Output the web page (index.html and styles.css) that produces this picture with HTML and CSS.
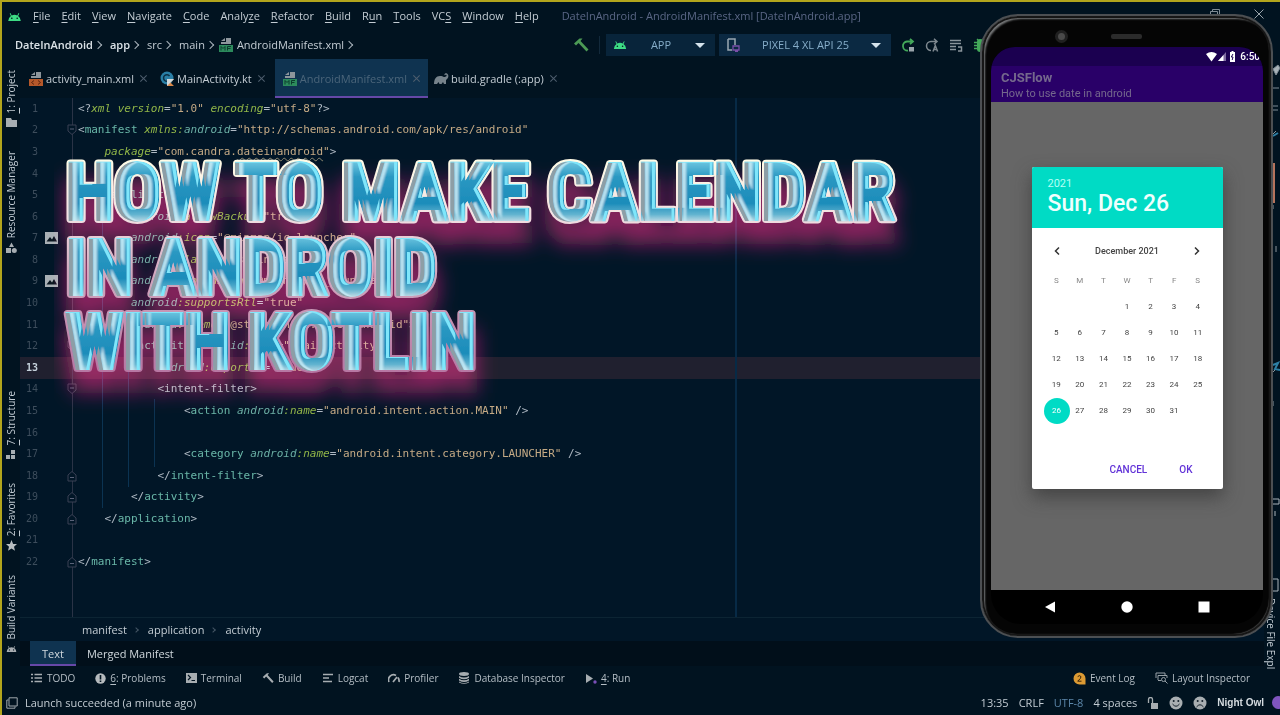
FILE: index.html
```html
<!DOCTYPE html>
<html lang="en">
<head>
<meta charset="utf-8">
<title>DateInAndroid - AndroidManifest.xml</title>
<link rel="stylesheet" href="styles.css">
</head>
<body>
<svg class="defs" width="0" height="0" aria-hidden="true">
  <symbol id="droid" viewBox="0 0 16 10"><path d="M1 10a7 7 0 0 1 3-5.600L2.700 1.600l.8-.4 1.400 2.700a7 7 0 0 1 6.200 0l1.400-2.700.8.400L12 4.400A7 7 0 0 1 15 10z" fill="currentColor"/><circle cx="5" cy="7" r=".9" fill="#011320"/><circle cx="11" cy="7" r=".9" fill="#011320"/></symbol>
  <symbol id="hammer" viewBox="0 0 16 16"><path d="M1 6.500 6.500 1.500h3L7.500 4l8 8.500-2 2L5.500 6 3 8.500z" fill="currentColor"/></symbol>
  <symbol id="manifest" viewBox="0 0 16 16"><path d="M8 1h5v6H3V5h5z" fill="#8d969c"/><path d="M3 4l4-3v3z" fill="#8d969c"/><path d="M1 8h14v7H1z" fill="#2c8a5c"/><path d="M3 13.500V9.500l2 2 2-2v4M9.500 13.500v-4h3.500M9.500 11.500h3" fill="none" stroke="#0b3b2c"/></symbol>
  <symbol id="layout" viewBox="0 0 16 16"><path d="M8 1h5v6H3V5h5z" fill="#8d969c"/><path d="M3 4l4-3v3z" fill="#8d969c"/><path d="M1 8h14v7H1z" fill="#b5582a"/><path d="M6 9.500l-2.500 2L6 13.500M10 9.500l2.500 2-2.500 2" fill="none" stroke="#5a2410"/></symbol>
  <symbol id="down" viewBox="0 0 10 12"><path d="M1 1h8v6L5 10.500 1 7z" fill="#011627" stroke="#3a4155"/><path d="M3 5h4" stroke="#5a6278"/></symbol>
  <symbol id="up" viewBox="0 0 10 12"><path d="M1 11h8V5L5 1.500 1 5z" fill="#011627" stroke="#3a4155"/><path d="M3 7.500h4" stroke="#5a6278"/></symbol>
  <symbol id="image" viewBox="0 0 13 12"><path d="M0 0h13v12H0z" fill="#a9b0b5"/><path d="M1.500 9.500 5 5l2 2.500L9 4l3 5.500z" fill="#0a1620"/></symbol>
</svg>

<div class="ide">
  <header class="menubar">
    <svg class="logo" width="15" height="9"><use href="#droid"/></svg>
    <nav class="menus">
      <button><u>F</u>ile</button><button><u>E</u>dit</button><button><u>V</u>iew</button><button><u>N</u>avigate</button><button><u>C</u>ode</button><button>Analy<u>z</u>e</button><button><u>R</u>efactor</button><button><u>B</u>uild</button><button>R<u>u</u>n</button><button><u>T</u>ools</button><button>VC<u>S</u></button><button><u>W</u>indow</button><button><u>H</u>elp</button>
    </nav>
    <span class="title">DateInAndroid - AndroidManifest.xml [DateInAndroid.app]</span>
    <div class="window-controls">
      <button aria-label="Restore"><svg width="10" height="10" viewBox="0 0 10 10" fill="none" stroke="#7f8b94"><path d="M2.500 2.500v-2h7v7h-2M.5 2.500h7v7h-7z"/></svg></button>
      <button aria-label="Close"><svg width="10" height="10" viewBox="0 0 10 10" stroke="#9aa4ab"><path d="M.5.5l9 9M9.500.5l-9 9"/></svg></button>
    </div>
  </header>

  <div class="navbar">
    <nav class="path">
      <b>DateInAndroid</b><i class="chev"></i><b>app</b><i class="chev"></i><span>src</span><i class="chev"></i><span>main</span><i class="chev near"></i><svg width="16" height="16"><use href="#manifest"/></svg><span class="file">AndroidManifest.xml</span><i class="chev near"></i>
    </nav>
    <div class="runbar">
      <button class="green" aria-label="Build"><svg width="16" height="16"><use href="#hammer"/></svg></button>
      <i class="sep"></i>
      <label class="combo app"><svg width="14" height="9"><use href="#droid"/></svg><select aria-label="Run configuration"><option>APP</option></select></label>
      <label class="combo device"><svg width="14" height="14" viewBox="0 0 14 14"><path d="M2 1h7v6M2 1v11h4" fill="none" stroke="#9aa8b3" stroke-width="1.500"/><path d="M7 8h6v4H7zM9 13.500h3" fill="none" stroke="#7a4fa8" stroke-width="1.300"/></svg><select aria-label="Device"><option>PIXEL 4 XL API 25</option></select></label>
      <button aria-label="Apply changes and restart"><svg width="14" height="14" viewBox="0 0 14 14"><path d="M7 12.500A4.500 4.500 0 0 1 6 3.500h5M9 .8l3 2.700-3 2.700" fill="none" stroke="#43a85a" stroke-width="1.800"/><path d="M8 9h5v4.500H8z" fill="#9aa4ab"/></svg></button>
      <button aria-label="Apply code changes"><svg width="14" height="14" viewBox="0 0 14 14"><path d="M6 12.500A4.500 4.500 0 0 1 6 3.500h5M9 .8l3 2.700-3 2.700M8 13.500l2.300-6 2.300 6M8.800 11.500h3" fill="none" stroke="#7e888f" stroke-width="1.500"/></svg></button>
      <button aria-label="Run tests"><svg width="14" height="14" viewBox="0 0 14 14"><path d="M1 2.500h11M1 5.500h11M1 8.500h6M1 11.500h6M9 9h3.500v4H9" fill="none" stroke="#8b959b" stroke-width="1.500"/></svg></button>
      <button aria-label="Debug"><svg width="14" height="14" viewBox="0 0 14 14"><path d="M4 4a3 3 0 0 1 6 0v7a3 3 0 0 1-6 0z" fill="#43a85a"/><path d="M1 4.500h12M1 7.500h12M1 10.500h12M4 1l2 2M10 1 8 3" stroke="#43a85a" stroke-width="1.300"/></svg></button>
    </div>
  </div>

  <div class="workspace">
    <aside class="stripe">
      <div class="group">
        <button><span><u>1</u>: Project</span><svg width="11" height="9" viewBox="0 0 11 9"><path d="M0 0h5l1 2h5v7H0z" fill="#a7adb1"/></svg></button>
        <button><span>Resource Manager</span><svg width="11" height="11" viewBox="0 0 11 11"><path d="M3 5 5.500.5 8 5zM0 6h5v5H0z" fill="#a7adb1"/><circle cx="8.300" cy="8.500" r="2.500" fill="#a7adb1"/></svg></button>
      </div>
      <div class="group">
        <button><span><u>7</u>: Structure</span><svg width="10" height="10" viewBox="0 0 10 10"><path d="M0 6h4v4H0zM5 6h4v4H5zM5 1h4v4H5z" fill="#a7adb1"/></svg></button>
        <button><span><u>2</u>: Favorites</span><svg width="11" height="11" viewBox="0 0 11 11"><path d="M5.500 0l1.600 3.900 3.900.2-3 2.600 1 4.100-3.500-2.300L2 10.800l1-4.100L0 4.100l3.900-.2z" fill="#b8bdc0"/></svg></button>
        <button><span>Build Variants</span><svg class="gray" width="11" height="9"><use href="#droid"/></svg></button>
      </div>
    </aside>

    <main class="editor">
      <div class="tabs" role="tablist">
        <button role="tab"><svg width="16" height="16"><use href="#layout"/></svg>activity_main.xml<i class="x"></i></button>
        <button role="tab"><svg width="15" height="15" viewBox="0 0 15 15"><circle cx="7" cy="7" r="6.500" fill="#2a7fa6"/><path d="M9.500 5a3.300 3.300 0 1 0 0 4" fill="none" stroke="#0b3045" stroke-width="1.500"/><path d="M7 15V8h7l-3.500 3.500L14 15z" fill="#d9894a"/><path d="M7 8h7l-7 7z" fill="#cfd8dc"/></svg>MainActivity.kt<i class="x"></i></button>
        <button role="tab" class="active" aria-selected="true"><svg width="16" height="16"><use href="#manifest"/></svg>AndroidManifest.xml<i class="x"></i></button>
        <button role="tab"><svg width="15" height="12" viewBox="0 0 15 12"><path d="M0 11C0 6 2 3 6 3c2 0 3 .5 4 1 1.500 0 3-.8 2.500-2-.6-.8-1.600 0-2 .3C10 .5 12-.2 13.300.7 15.500 2.500 14 6 12 7v4h-2L9 9 7.500 11h-2L4.500 9 3 11z" fill="#77838b"/></svg>build.gradle (:app)<i class="x"></i></button>
      </div>

      <div class="code">
        <i class="rail"></i><i class="margin"></i><i class="guide g1"></i><i class="guide g2"></i><i class="guide g3"></i>
        <div class="line"><span class="n">1</span><span class="m"></span><span class="f"></span><code>&lt;?<em>xml version</em>=<s>"1.0"</s> <em>encoding</em>=<s>"utf-8"</s>?&gt;</code></div>
        <div class="line"><span class="n">2</span><span class="m"></span><span class="f"><svg width="10" height="12"><use href="#down"/></svg></span><code>&lt;<b>manifest</b> <em>xmlns:</em><q>android</q>=<s>"http://schemas.android.com/apk/res/android"</s></code></div>
        <div class="line"><span class="n">3</span><span class="m"></span><span class="f"></span><code>    <em>package</em>=<s>"com.candra.<span class="wavy">dateinandroid</span>"</s>&gt;</code></div>
        <div class="line"><span class="n">4</span></div>
        <div class="line"><span class="n">5</span><span class="m"></span><span class="f"></span><code>    &lt;<b>application</b></code></div>
        <div class="line"><span class="n">6</span><span class="m"></span><span class="f"></span><code>        <q>android</q><em>:allowBackup</em>=<s>"true"</s></code></div>
        <div class="line"><span class="n">7</span><span class="m"><svg width="13" height="12"><use href="#image"/></svg></span><span class="f"></span><code>        <q>android</q><em>:icon</em>=<s>"@mipmap/ic_launcher"</s></code></div>
        <div class="line"><span class="n">8</span><span class="m"></span><span class="f"></span><code>        <q>android</q><em>:label</em>=<s>"@string/app_name"</s></code></div>
        <div class="line"><span class="n">9</span><span class="m"><svg width="13" height="12"><use href="#image"/></svg></span><span class="f"></span><code>        <q>android</q><em>:roundIcon</em>=<s>"@mipmap/ic_launcher"</s></code></div>
        <div class="line"><span class="n">10</span><span class="m"></span><span class="f"></span><code>        <q>android</q><em>:supportsRtl</em>=<s>"true"</s></code></div>
        <div class="line"><span class="n">11</span><span class="m"></span><span class="f"></span><code>        <q>android</q><em>:theme</em>=<s>"@style/Theme.DateInAndroid"</s>&gt;</code></div>
        <div class="line"><span class="n">12</span><span class="m"></span><span class="f"><svg width="10" height="12"><use href="#down"/></svg></span><code>        &lt;<b>activity</b> <q>android</q><em>:name</em>=<s>".MainActivity"</s></code></div>
        <div class="line current"><span class="n">13</span><span class="m"></span><span class="f"></span><code>            <q>android</q><em>:exported</em>=<s>"true"</s>&gt;</code></div>
        <div class="line"><span class="n">14</span><span class="m"></span><span class="f"><svg width="10" height="12"><use href="#down"/></svg></span><code>            &lt;intent-filter&gt;</code></div>
        <div class="line"><span class="n">15</span><span class="m"></span><span class="f"></span><code>                &lt;<b>action</b> <q>android</q><em>:name</em>=<s>"android.intent.action.MAIN"</s> /&gt;</code></div>
        <div class="line"><span class="n">16</span></div>
        <div class="line"><span class="n">17</span><span class="m"></span><span class="f"></span><code>                &lt;<b>category</b> <q>android</q><em>:name</em>=<s>"android.intent.category.LAUNCHER"</s> /&gt;</code></div>
        <div class="line"><span class="n">18</span><span class="m"></span><span class="f"><svg width="10" height="12"><use href="#up"/></svg></span><code>            &lt;/<b>intent-filter</b>&gt;</code></div>
        <div class="line"><span class="n">19</span><span class="m"></span><span class="f"><svg width="10" height="12"><use href="#up"/></svg></span><code>        &lt;/<b>activity</b>&gt;</code></div>
        <div class="line"><span class="n">20</span><span class="m"></span><span class="f"><svg width="10" height="12"><use href="#up"/></svg></span><code>    &lt;/<b>application</b>&gt;</code></div>
        <div class="line"><span class="n">21</span></div>
        <div class="line"><span class="n">22</span><span class="m"></span><span class="f"><svg width="10" height="12"><use href="#up"/></svg></span><code>&lt;/<b>manifest</b>&gt;</code></div>
      </div>

      <nav class="crumbs"><span>manifest</span><i class="chev"></i><span>application</span><i class="chev"></i><span>activity</span></nav>
      <div class="views" role="tablist"><button role="tab" class="active" aria-selected="true">Text</button><button role="tab">Merged Manifest</button></div>
    </main>

    <aside class="right-stripe">
      <svg class="slivers" width="8" height="560" viewBox="0 0 8 560" aria-hidden="true"><path d="M1 10l5-4 2 3-4 7zM1 29h6M1 47h5M1 51h5" fill="#a9b3b9" stroke="#7f8b94"/><path d="M0 104h3v40H0z" fill="#b5735c"/><path d="M0 76l4-4M1 146v4M4 187v6M4 310l-3 3M1 342v5" stroke="#8b959b"/><path d="M1 306l5-2-3 6 5 1M1 77l5-3" stroke="#2d7fa5" stroke-width="2"/><path d="M1 440h6v5H1M3 452v5M1 520h5v12H1" fill="none" stroke="#a9b3b9"/></svg>
      <button><span>Device File Expl</span></button>
    </aside>
  </div>

  <div class="toolbar">
    <button><svg width="12" height="10" viewBox="0 0 12 10" stroke="#a7adb1" stroke-width="1.500"><path d="M0 1.500h2M0 5h2M0 8.500h2M3.500 1.500H11M3.500 5H11M3.500 8.500H11"/></svg>TODO</button>
    <button><svg width="11" height="11" viewBox="0 0 11 11"><circle cx="5.500" cy="5.500" r="5.200" fill="#b5babd"/><path d="M5.500 2v4.500M5.500 7.500V9" stroke="#011320" stroke-width="1.600"/></svg><span><u>6</u>: Problems</span></button>
    <button><svg width="11" height="10" viewBox="0 0 11 10"><path d="M0 0h11v10H0z" fill="#a7adb1"/><path d="M2 2l2.500 2.500L2 7M5.500 7.500H9" fill="none" stroke="#011320" stroke-width="1.200"/></svg>Terminal</button>
    <button><svg class="gray" width="12" height="12"><use href="#hammer"/></svg>Build</button>
    <button><svg width="12" height="10" viewBox="0 0 12 10" stroke="#a7adb1" stroke-width="1.600"><path d="M1 1.500h10M1 5h6M1 8.500h9"/></svg>Logcat</button>
    <button><svg width="12" height="10" viewBox="0 0 12 10" fill="none" stroke="#a7adb1" stroke-width="1.700"><path d="M1 9a5 5 0 0 1 7-6.500M10 4.500A6 6 0 0 1 11 9M5 9l4-5"/></svg>Profiler</button>
    <button><svg width="12" height="12" viewBox="0 0 12 12"><ellipse cx="6" cy="2" rx="5" ry="1.900" fill="#a7adb1"/><path d="M1 4q5 3 10 0v1.700q-5 3-10 0zM1 6.800q5 3 10 0v1.700q-5 3-10 0zM1 9.500q5 3 10 0v1q-5 2.500-10 0z" fill="#a7adb1"/></svg>Database Inspector</button>
    <button><svg width="12" height="11" viewBox="0 0 12 11"><path d="M1 1l7 4.500L1 10z" fill="#a7adb1"/><circle cx="10" cy="9" r="1.700" fill="#7a4fb8"/></svg><span><u>4</u>: Run</span></button>
    <button class="push"><svg width="13" height="13" viewBox="0 0 13 13"><path d="M6.500.5a6 6 0 0 1 6 6V12.500h-6a6 6 0 0 1 0-12z" fill="#dc9a33"/><path d="M4.700 4.600q1.800-1.900 3.300 0 .4 1.400-3.300 4.600h3.800" fill="none" stroke="#3a2408"/></svg>Event Log</button>
    <button><svg width="13" height="12" viewBox="0 0 13 12" fill="none" stroke="#98a1a7"><path d="M1 6V1h9v2M3 8V3.500h9V6M3 8.500h3"/><circle cx="8.500" cy="7.500" r="2"/><path d="M10 9l2.500 2.500"/></svg>Layout Inspector</button>
  </div>

  <footer class="status">
    <svg width="12" height="12" viewBox="0 0 12 12" fill="none" stroke="#a0a8ad"><path d="M3 .8h8.200V9H3zM2.500 3H.8v8.200H9V9.500"/></svg>
    <span>Launch succeeded (a minute ago)</span>
    <span class="push">13:35</span><span>CRLF</span><span class="enc">UTF-8</span><span>4 spaces</span>
    <svg width="12" height="12" viewBox="0 0 12 12"><path d="M4 6h7v6H4z" fill="#a7adb1"/><path d="M1.500 6V2.500a2 2 0 0 1 4 0V6" fill="none" stroke="#a7adb1" stroke-width="1.300"/></svg>
    <svg width="14" height="14" viewBox="0 0 14 14"><circle cx="7" cy="7" r="6.500" fill="#a9aeb1"/><path d="M3.500 8q3.500 4.500 7 0" fill="none" stroke="#15202a"/><circle cx="4.700" cy="5" r="1" fill="#15202a"/><circle cx="9.300" cy="5" r="1" fill="#15202a"/></svg>
    <svg width="14" height="14" viewBox="0 0 14 14"><circle cx="7" cy="7" r="6.500" fill="#a9aeb1"/><path d="M3.500 11q3.500-4.500 7 0" fill="none" stroke="#15202a"/><circle cx="4.700" cy="5" r="1" fill="#15202a"/><circle cx="9.300" cy="5" r="1" fill="#15202a"/></svg>
    <b>Night Owl</b><i class="dot"></i>
  </footer>

  <h1 class="headline" aria-label="How to make calendar in Android with Kotlin">
    <svg class="glow" width="900" height="280" viewBox="0 0 900 280" aria-hidden="true">
      <filter id="blur" x="-10%" y="-20%" width="120%" height="150%"><feGaussianBlur stdDeviation="10"/></filter>
      <g filter="url(#blur)"><use href="#words" y="20"/></g>
    </svg>
    <svg class="letters" width="900" height="280" viewBox="0 0 900 280">
      <defs>
        <linearGradient id="fill" gradientUnits="userSpaceOnUse" x1="0" y1="10" x2="0" y2="85" spreadMethod="repeat"><stop offset="0" stop-color="#6cc4df"/><stop offset=".2" stop-color="#2a98c2"/><stop offset=".55" stop-color="#1c8cba"/><stop offset=".7" stop-color="#62b4d0"/><stop offset=".8" stop-color="#c5dde6"/><stop offset="1" stop-color="#d5e4ea"/></linearGradient>
        <linearGradient id="rim" gradientUnits="userSpaceOnUse" x1="0" y1="10" x2="0" y2="230"><stop offset="0" stop-color="#fffbe6"/><stop offset=".25" stop-color="#f3dfe2"/><stop offset=".5" stop-color="#d2a9bf"/><stop offset="1" stop-color="#b472a0"/></linearGradient>
        <filter id="bevel" x="-1%" y="-2%" width="102%" height="104%">
          <feOffset in="SourceAlpha" dx="4" result="r"/><feComposite in="SourceAlpha" in2="r" operator="out" result="le"/>
          <feFlood flood-color="#8d9ea6"/><feComposite in2="le" operator="in" result="dark"/>
          <feOffset in="le" dx="4" result="le2"/><feGaussianBlur in="le2" stdDeviation="1.200 0" result="le3"/>
          <feFlood flood-color="#c9eef8" flood-opacity=".85"/><feComposite in2="le3" operator="in" result="lite"/>
          <feOffset in="SourceAlpha" dx="-3" dy="1" result="l"/><feComposite in="SourceAlpha" in2="l" operator="out" result="re"/><feGaussianBlur in="re" stdDeviation=".6" result="re2"/><feOffset in="re2" dx="-1" result="re3"/>
          <feFlood flood-color="#7fe6fb"/><feComposite in2="re3" operator="in" result="cyan"/>
          <feMerge result="all"><feMergeNode in="SourceGraphic"/><feMergeNode in="lite"/><feMergeNode in="dark"/><feMergeNode in="cyan"/></feMerge>
          <feComposite in="all" in2="SourceAlpha" operator="in"/>
        </filter>
      </defs>
      <g class="rim"><use href="#words"/></g>
      <g class="face" filter="url(#bevel)"><g id="words"><text class="large" x="12" y="67">HOW TO MAKE CALENDAR</text><text x="12" y="142">IN ANDROID</text><text x="12" y="216">WITH KOTLIN</text></g></g>
    </svg>
  </h1>

  <section class="phone" aria-label="Emulator">
    <div class="bezel"><i class="camera"></i><i class="speaker"></i></div>
    <div class="screen">
      <div class="sysbar">
        <svg width="30" height="11" viewBox="0 0 30 11"><path d="M0 3q5.500-4 11 0L5.500 10.500z" fill="#fff"/><path d="M20 1v9h-8z" fill="#7f6ba0"/><path d="M17.500 4v6H12z" fill="#fff"/><path d="M24 1h1.500V0h2v1H29v10h-5z" fill="#fff"/><path d="M27 3l-1.700 3H27l-.8 3" fill="none" stroke="#1b0050"/></svg>
        <span>6:50</span>
      </div>
      <div class="appbar"><strong>CJSFlow</strong><span>How to use date in android</span></div>
      <div class="content">
        <div class="dialog" role="dialog" aria-label="Choose date">
          <div class="chosen"><span>2021</span><strong>Sun, Dec 26</strong></div>
          <div class="month"><button aria-label="Previous month"><svg width="8" height="10" viewBox="0 0 8 10"><path d="M6 1.500 2.500 5 6 8.500" fill="none" stroke="#333" stroke-width="1.500"/></svg></button><span>December 2021</span><button aria-label="Next month"><svg width="8" height="10" viewBox="0 0 8 10"><path d="M2 1.500 5.500 5 2 8.500" fill="none" stroke="#333" stroke-width="1.500"/></svg></button></div>
          <table>
            <thead><tr><th>S</th><th>M</th><th>T</th><th>W</th><th>T</th><th>F</th><th>S</th></tr></thead>
            <tbody>
              <tr><td></td><td></td><td></td><td>1</td><td>2</td><td>3</td><td>4</td></tr>
              <tr><td>5</td><td>6</td><td>7</td><td>8</td><td>9</td><td>10</td><td>11</td></tr>
              <tr><td>12</td><td>13</td><td>14</td><td>15</td><td>16</td><td>17</td><td>18</td></tr>
              <tr><td>19</td><td>20</td><td>21</td><td>22</td><td>23</td><td>24</td><td>25</td></tr>
              <tr><td class="selected"><span>26</span></td><td>27</td><td>28</td><td>29</td><td>30</td><td>31</td><td></td></tr>
            </tbody>
          </table>
          <div class="actions"><button>CANCEL</button><button>OK</button></div>
        </div>
      </div>
      <div class="keys">
        <button aria-label="Back"><svg width="12" height="12" viewBox="0 0 12 12"><path d="M11 .5v11L1 6z" fill="#fff"/></svg></button>
        <button aria-label="Home"><svg width="12" height="12" viewBox="0 0 12 12"><circle cx="6" cy="6" r="5.700" fill="#fff"/></svg></button>
        <button aria-label="Recents"><svg width="12" height="12" viewBox="0 0 12 12"><path d="M.5.5h11v11H.5z" fill="#fff"/></svg></button>
      </div>
    </div>
  </section>
</div>
</body>
</html>
```
FILE: styles.css
```css
* { box-sizing: border-box; }
body {
  margin: 0;
  background: #011320;
  color: #c3ccd3;
  font: 11px/16px "Open Sans", "Noto Sans", sans-serif;
}
.defs { position: absolute; }
svg { flex: none; display: block; }
button {
  display: flex;
  align-items: center;
  padding: 0;
  border: 0;
  background: none;
  color: inherit;
  font: inherit;
  white-space: nowrap;
}
u { text-underline-offset: 2px; }
.gray { color: #a7adb1; }
.push { margin-left: auto; }

.ide {
  position: relative;
  display: flex;
  flex-direction: column;
  height: 100vh;
  overflow: hidden;
  border: solid #b3a51c;
  border-width: 2px 0 0 2px;
}

/* menu bar */
.menubar { display: flex; align-items: center; height: 28px; padding: 0 16px 0 5px; }
.logo { color: #3ddc84; margin-right: 11px; }
.menus { display: flex; gap: 11px; }
.title { margin-left: 23px; color: #5a6685; }
.window-controls { display: flex; gap: 34px; margin-left: auto; margin-bottom: 5px; }

/* breadcrumb path and run controls */
.navbar { display: flex; align-items: center; justify-content: space-between; height: 29px; padding: 0 293px 0 13px; }
.path { display: flex; align-items: center; }
.path b { color: #dbe2e7; font-weight: 600; }
.file { margin-left: 3px; }
.chev {
  width: 6px;
  height: 6px;
  margin: 0 9px 0 2px;
  border: solid #aab4bc;
  border-width: 1px 1px 0 0;
  transform: rotate(45deg);
}
.chev.near { margin-right: 5px; }
.runbar { display: flex; align-items: center; gap: 10px; }
.green { color: #4c9a55; }
.sep { width: 1px; height: 18px; margin-right: -4px; background: #12293b; }
.combo { position: relative; display: flex; align-items: center; height: 22px; padding-left: 7px; background: #08243a; color: #8fb3cc; }
.combo.app { width: 109px; color: #3ddc84; }
.combo.device { width: 172px; margin: 0 0 0 -6px; background: #0b2942; }
.combo select {
  flex: 1;
  height: 22px;
  padding: 0 20px 0 0;
  border: 0;
  appearance: none;
  background: none;
  color: #86adc9;
  font: inherit;
  text-align-last: center;
}
.combo::after {
  content: "";
  position: absolute;
  right: 10px;
  top: 9px;
  border: solid transparent;
  border-width: 5px 5px 0;
  border-top-color: #d5e3ec;
}

/* workspace */
.workspace { display: flex; flex: 1; min-height: 0; }
.stripe { display: flex; flex-direction: column; justify-content: space-between; width: 18px; padding: 11px 0 13px; }
.group { display: flex; flex-direction: column; gap: 24px; }
.stripe button { flex-direction: column; gap: 4px; font-size: 10px; }
.stripe span { writing-mode: vertical-rl; transform: rotate(180deg); }
.right-stripe { display: flex; flex-direction: column; justify-content: space-between; align-items: flex-end; width: 16px; }
.right-stripe button { position: absolute; right: 1px; bottom: 46px; font-size: 10px; }
.right-stripe span { writing-mode: vertical-rl; }
.editor { display: flex; flex: 1; flex-direction: column; min-width: 0; }

.tabs { display: flex; height: 39px; padding-left: 7px; }
.tabs button { padding: 0 9px 0 1px; }
.tabs svg { margin-right: 2px; }
.tabs button + button { padding-left: 3px; }
.tabs button.active { padding: 0 7px; background: #0f3350; color: #4b657a; box-shadow: inset 0 -2px #6648a8; }
.tabs .active + button { padding-left: 6px; }
.x { position: relative; width: 9px; height: 9px; margin-left: 5px; }
.x::before, .x::after { content: ""; position: absolute; left: 4px; top: 0; width: 1px; height: 9px; background: #4e5f6e; transform: rotate(45deg); }
.x::after { transform: rotate(-45deg); }

/* code */
.code {
  position: relative;
  display: grid;
  grid-template-rows: repeat(24, minmax(0, 1fr));
  flex: 1;
  min-height: 0;
  padding-bottom: 1px;
  background: #011627;
  border-bottom: 1px solid #0c2433;
  font-family: "DejaVu Sans Mono", "Liberation Mono", monospace;
}
.line { display: grid; grid-template-columns: 18px 27px 13px 1fr; align-items: center; min-height: 0; }
.n { color: #3d4d5c; text-align: right; font-size: 10px; }
.m { justify-self: center; }
.f { position: relative; justify-self: center; }
.current { background: #20202f; }
.current .n { color: #c5d0da; font-weight: bold; }
.code code { position: relative; font: inherit; white-space: pre; color: #b0bac4; }
.code b { font-weight: normal; color: #69b7a8; }
.code em { color: #91b648; }
.code q { quotes: none; font-style: italic; color: #6aaea4; }
.code q::before, .code q::after { content: none; }
.code s { text-decoration: none; color: #c5aa85; }
.wavy { text-decoration: underline wavy 1px #8d8870; text-underline-offset: 2px; }
.rail, .margin, .guide { position: absolute; width: 1px; top: 0; bottom: 0; background: #2a3346; }
.rail { left: 52px; }
.margin { left: 715px; width: 2px; background: #072a46; }
.guide { background: #0b3352; }
.g1 { left: 82px; top: 21%; bottom: 21%; }
.g2 { left: 108px; top: 50%; bottom: 25%; }
.g3 { left: 134px; top: 58%; bottom: 29%; }

.crumbs { display: flex; align-items: center; height: 23px; padding-left: 62px; background: #011627; }
.crumbs .chev { width: 4px; height: 4px; margin: 0 10px 0 7px; border-color: #455665; }
.views { display: flex; height: 25px; padding-left: 10px; background: #010f1a; color: #d0d8dd; }
.views button { padding: 0 11px; }
.views .active { padding: 0 12px; background: #0f3350; box-shadow: inset 0 -2px #6648a8; }

.toolbar { display: flex; align-items: center; gap: 20px; height: 24px; padding: 0 30px 0 29px; color: #b5bec5; font-size: 10px; font-weight: 500; }
.toolbar button { gap: 4px; }
.toolbar .push { margin-left: auto; }
.status { display: flex; align-items: center; gap: 10px; height: 25px; padding: 0 0 0 4px; }
.status svg + span { margin-left: -3px; }
.status .push { margin-left: auto; }
.enc { color: #5c87aa; }
.status b { color: #d5dce0; font: bold 10px "Liberation Sans", Arial, sans-serif; }
.dot { width: 12px; height: 13px; margin: 0 -4px 0 -2px; border-radius: 50%; background: #8055be; }

/* headline laid over the editor */
.headline { position: absolute; left: 52px; top: 150px; margin: 0; }
.headline text { font: bold 76px "Roboto Condensed", "Liberation Sans Narrow", "Arial Narrow", sans-serif; }
.headline .large { font-size: 78px; }
.letters { position: relative; }
.glow { position: absolute; fill: #86103f; stroke: #86103f; stroke-width: 10px; mix-blend-mode: screen; }
.face { fill: url(#fill); stroke: url(#fill); stroke-width: 4px; }
.rim { fill: url(#rim); stroke: url(#rim); stroke-width: 8px; stroke-linejoin: round; }

/* phone floating over the window */
.phone {
  position: absolute;
  right: 7px;
  top: 12px;
  display: flex;
  flex-direction: column;
  width: 293px;
  height: 624px;
  padding: 0 8px 12px 9px;
  border: solid #4c4f52;
  border-width: 2px;
  border-radius: 38px;
  background: #050505;
  box-shadow: inset 0 0 0 2px #161616, inset 3px 3px 2px #77797a, inset -2px -2px 1px #444;
  font-family: Roboto, sans-serif;
}
.bezel { position: relative; flex: none; height: 31px; }
.camera { position: absolute; left: 64px; top: 14px; width: 13px; height: 13px; border: 3px solid #202020; border-radius: 50%; background: #4a4a4a; }
.speaker { position: absolute; left: 120px; top: 18px; width: 31px; height: 5px; border-radius: 2px; background: #2b2b2b; }
.screen { display: flex; flex: 1; flex-direction: column; min-height: 0; overflow: hidden; border-radius: 24px 24px 30px 30px; background: #000; }
.sysbar { display: flex; align-items: center; justify-content: flex-end; gap: 4px; height: 19px; padding-right: 3px; background: #1b0050; color: #fff; font-size: 10px; font-weight: 500; }
.appbar { display: flex; flex-direction: column; height: 36px; padding: 4px 10px; background: #290068; color: #75688d; }
.appbar strong { font-size: 13px; font-weight: 700; }
.appbar span { font-size: 11px; }
.content { display: flex; flex: 1; flex-direction: column; align-items: center; padding-top: 65px; background: #666; }
.keys { display: flex; align-items: center; justify-content: space-evenly; height: 34px; }
.keys button { padding: 0 12px; }

.dialog { width: 191px; overflow: hidden; border-radius: 2px; background: #fff; color: #444; box-shadow: 0 8px 18px #333a; }
.chosen { display: flex; flex-direction: column; height: 61px; padding: 9px 16px; background: #00dbc5; color: #b5fff5; }
.chosen strong { color: #effffd; font-size: 23px; line-height: 24px; font-weight: 500; }
.month { display: flex; align-items: center; justify-content: space-between; height: 40px; padding: 6px 21px 0; font-size: 9px; font-weight: 500; }
.dialog table { width: 165px; margin: 0 auto; border-spacing: 0; table-layout: fixed; font-size: 8px; line-height: 12px; text-align: center; }
.dialog th { font-weight: 400; color: #888; }
.dialog th, .dialog td { height: 26px; padding: 0; }
.selected span { display: block; width: 26px; margin: 0 -1px; border-radius: 50%; background: #00dbc5; color: #fff; line-height: 26px; }
.actions { display: flex; justify-content: flex-end; gap: 32px; padding: 38px 30px 11px; color: #6233d8; font-size: 10px; font-weight: 500; }
```
